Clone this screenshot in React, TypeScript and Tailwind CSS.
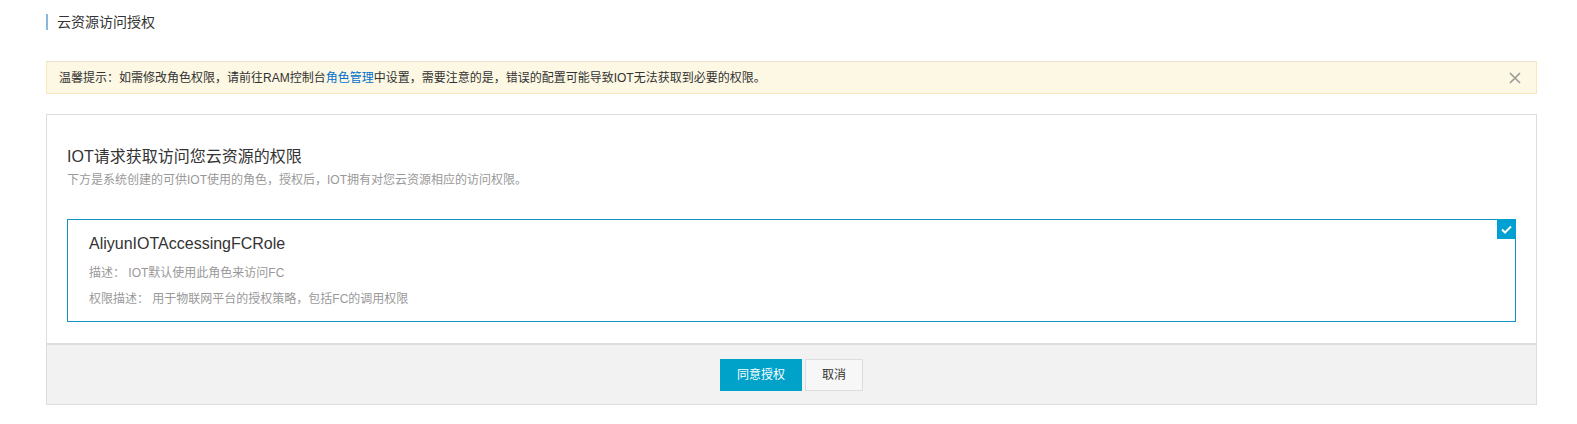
import { useState } from 'react';

const font = "font-['Liberation_Sans','Noto_Sans_CJK_SC',sans-serif]";

const App = () => {
  const [showTip, setShowTip] = useState(true);
  const [checked, setChecked] = useState(true);

  return (
    <div className={`min-h-screen bg-white pl-[46px] pr-[40px] pt-[14px] text-[#333] ${font}`}>
      {/* page title */}
      <div className="flex h-[16px] items-center">
        <span className="mr-[9px] h-[16px] w-[2px] bg-[#88b7e0]" />
        <span className="text-[14px] leading-[16px] text-[#333]">云资源访问授权</span>
      </div>

      {showTip && (
        <div className="mt-[31px] flex h-[33px] items-center justify-between border border-[#f6e9c0] border-t-[#e6e0cc] bg-[#fdf8e3] pl-[12px] pr-[14px]">
          <p className="text-[12px] leading-[16px] text-[#333]">
            温馨提示：如需修改角色权限，请前往RAM控制台
            <a href="#" className="text-[#0070cc]">
              角色管理
            </a>
            中设置，需要注意的是，错误的配置可能导致IOT无法获取到必要的权限。
          </p>
          <button onClick={() => setShowTip(false)} className="flex h-[14px] w-[14px] items-center justify-center text-[#999]">
            <svg width="12" height="12" viewBox="0 0 12 12" fill="none" stroke="currentColor" strokeWidth={1.6}>
              <path d="M1 1l10 10M11 1L1 11" />
            </svg>
          </button>
        </div>
      )}

      {/* auth card */}
      <div className="mt-[20px] border border-[#ddd]">
        <div className="px-[20px] pb-[21px] pt-[31px]">
          <h2 className="text-[16px] leading-[22px] text-[#333]">IOT请求获取访问您云资源的权限</h2>
          <p className="mt-[4px] text-[12px] leading-[16px] text-[#999]">
            下方是系统创建的可供IOT使用的角色，授权后，IOT拥有对您云资源相应的访问权限。
          </p>

          <div
            onClick={() => setChecked(!checked)}
            className="relative mt-[31px] h-[103px] cursor-pointer border border-[#1394c5] pl-[21px] pt-[13px]"
          >
            <div className="text-[16px] leading-[22px] text-[#333]">AliyunIOTAccessingFCRole</div>
            <div className="mt-[10px] text-[12px] leading-[16px] text-[#999]">描述： IOT默认使用此角色来访问FC</div>
            <div className="mt-[10px] text-[12px] leading-[16px] text-[#999]">
              权限描述： 用于物联网平台的授权策略，包括FC的调用权限
            </div>
            {checked && (
              <span className="absolute right-[-1px] top-[-1px] flex h-[20px] w-[19px] items-center justify-center bg-[#00a0d2]">
                <svg width="11" height="9" viewBox="0 0 11 9" fill="none" stroke="white" strokeWidth={2}>
                  <path d="M1 4.5l3 3 6-6" />
                </svg>
              </span>
            )}
          </div>
        </div>

        <div className="flex h-[61px] items-center justify-center gap-[3px] border-t-2 border-[#ddd] bg-[#f2f2f2]">
          <button className="h-[32px] w-[82px] bg-[#00a2ca] text-[12px] text-white">同意授权</button>
          <button className="h-[32px] w-[58px] border border-[#ddd] bg-[#f7f7f7] text-[12px] text-[#333]">取消</button>
        </div>
      </div>
    </div>
  );
};

export default App;
